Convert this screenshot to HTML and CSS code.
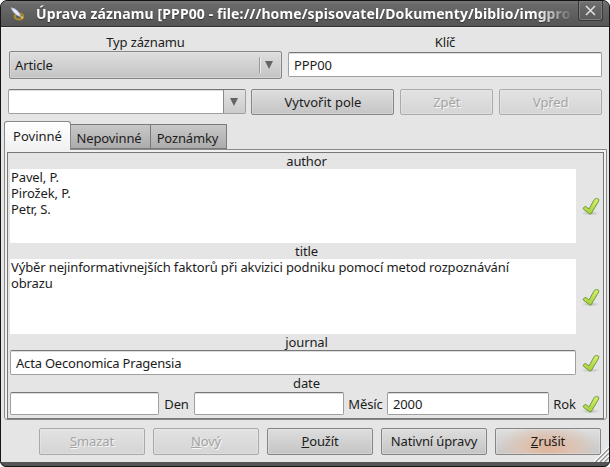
FILE: index.html
```html
<!DOCTYPE html>
<html lang="cs">
<head>
<meta charset="utf-8">
<title>Úprava záznamu</title>
<link rel="stylesheet" href="styles.css">
</head>
<body>
<svg width="0" height="0" class="defs">
  <defs>
    <linearGradient id="green" x1="0" y1="0" x2="0" y2="1"><stop offset="0" stop-color="#d9ee70"/><stop offset="1" stop-color="#a6cf38"/></linearGradient>
    <radialGradient id="shade"><stop offset="0" stop-color="#999" stop-opacity=".6"/><stop offset="1" stop-color="#999" stop-opacity="0"/></radialGradient>
    <symbol id="check" viewBox="0 0 20 20">
      <ellipse cx="9.5" cy="17.3" rx="9.5" ry="2.2" fill="url(#shade)"/>
      <path d="M2.3 12.2Q3.2 10.2 4.9 10.6L8 13L13.4 3.3Q15.4 1.6 17.7 3.2V5L10 18H8.9L2.5 13.3Z" fill="url(#green)" stroke="#6f9c45" stroke-width="1" stroke-linejoin="round"/>
    </symbol>
  </defs>
</svg>
<div class="window">
  <header class="titlebar">
    <svg class="app-icon" width="16" height="16" viewBox="0 0 16 16">
      <ellipse cx="9" cy="9.5" rx="4.2" ry="3" fill="none" stroke="#a98a28" stroke-width="2.2"/>
      <path d="M11 10l2 1" stroke="#e2c050" stroke-width="2"/>
      <path d="M1 .7Q5.5 1.3 8.5 5L11 9.8L7 8.2Q2.8 5.5 1 .7Z" fill="#e9eaff" stroke="#b9bad4" stroke-width=".7"/>
    </svg>
    <h1 class="title">Úprava záznamu [PPP00 - file:///home/spisovatel/Dokumenty/biblio/imgpro</h1>
    <div class="close"><svg width="11" height="11" viewBox="0 0 11 11"><path d="M1 1L10 10M10 1L1 10" stroke="#e2e2e2" stroke-width="1.5"/></svg></div>
  </header>
  <main class="content">
    <div class="top-row">
      <div class="type-col"><span class="label">Typ záznamu</span>
        <div class="button select"><span>Article</span><i class="divider"></i><i class="arrow"></i></div>
      </div>
      <div class="key-col"><span class="label">Klíč</span><div class="field key"><span>PPP00</span></div></div>
    </div>
    <div class="tool-row">
      <div class="field combo"><div class="drop"><i class="arrow"></i></div></div>
      <div class="button create"><span class="t-create">Vytvořit pole</span></div>
      <div class="button disabled undo"><span>Zpět</span></div>
      <div class="button disabled redo"><span>Vpřed</span></div>
    </div>
    <nav class="tabs">
      <div class="tab active"><span>Povinné</span></div>
      <div class="tab second"><span>Nepovinné</span></div>
      <div class="tab third"><span>Poznámky</span></div>
    </nav>
    <section class="pane"><div class="frame">
      <div class="caption">author</div>
      <div class="entry"><div class="area authors">Pavel, P.<br>Pirožek, P.<br>Petr, S.</div><svg class="check" width="20" height="20"><use href="#check"/></svg></div>
      <div class="caption">title</div>
      <div class="entry"><div class="area area-title"><span>Výběr nejinformativnejších faktorů při akvizici podniku pomocí metod rozpoznávání</span><br>obrazu</div><svg class="check" width="20" height="20"><use href="#check"/></svg></div>
      <div class="caption">journal</div>
      <div class="entry"><div class="field journal"><span class="t-journal">Acta Oeconomica Pragensia</span></div><svg class="check" width="20" height="20"><use href="#check"/></svg></div>
      <div class="caption date-caption">date</div>
      <div class="entry date">
        <div class="field day"></div><span class="unit den">Den</span>
        <div class="field month"></div><span class="unit mesic">Měsíc</span>
        <div class="field year"><span>2000</span></div><span class="unit rok">Rok</span>
        <svg class="check" width="20" height="20"><use href="#check"/></svg>
      </div>
    </div></section>
    <footer class="actions">
      <div class="button disabled"><span><u>S</u>mazat</span></div>
      <div class="button disabled"><span><u>N</u>ový</span></div>
      <div class="button"><span><u>P</u>oužít</span></div>
      <div class="button"><span>Nativní úpravy</span></div>
      <div class="button glow"><span><u>Z</u>rušit</span></div>
    </footer>
    <svg class="grip" width="15" height="15" viewBox="0 0 15 15"><path d="M0 15L15 0M4.5 15L15 4.5M9 15L15 9" stroke="#fff" stroke-width="1.5"/><path d="M1.5 15L15 1.5M6 15L15 6M10.5 15L15 10.5" stroke="#8c8c8c" stroke-width="1.2"/></svg>
  </main>
</div>
</body>
</html>
```

FILE: styles.css
```css
* { box-sizing: border-box; }
body { margin: 0; background: #fff; font: 13px/16px "Noto Sans", "Open Sans", sans-serif; color: #1c1c1c; letter-spacing: -0.13px; }
.defs { position: absolute; }
.window { width: 610px; height: 467px; border: 1px solid #151515; border-radius: 7px 7px 6px 6px; background: #555; overflow: hidden; padding-bottom: 4px; display: flex; flex-direction: column; }
.titlebar { height: 26px; flex: none; display: flex; background: linear-gradient(#777 0, #696969 15%, #555 100%); border-bottom: 1px solid #303030; }
.app-icon { margin: 6px 0 0 9px; flex: none; }
.title { margin: 2px 0 0 10px; width: 538px; flex: none; font-size: 14px; line-height: 22px; font-weight: 700; color: #fff; white-space: nowrap; overflow: hidden; letter-spacing: 0.11px; text-shadow: 0 1px 1px #333; -webkit-mask-image: linear-gradient(90deg, #000 500px, transparent 538px); mask-image: linear-gradient(90deg, #000 500px, transparent 538px); }
.close { width: 25px; height: 20px; margin-left: 4px; border: 1px solid #383838; border-top: 0; border-radius: 0 0 3px 3px; box-shadow: inset 0 0 0 1px #7d7d7d; display: flex; align-items: center; justify-content: center; }
.content { flex: 1; background: #e5e5e5; position: relative; border-top: 1px solid #eee; overflow: hidden; }
.label { display: block; text-align: center; height: 17px; white-space: nowrap; }
.top-row { display: flex; margin: 6px 7px 0 8px; gap: 6px; }
.type-col { width: 273px; }
.key-col { width: 314px; }
.button { border: 1px solid #858585; border-radius: 2px; height: 27px; display: flex; align-items: center; justify-content: center; white-space: nowrap; background: linear-gradient(#dedede, #c4c4c4); box-shadow: inset 0 0 0 1px #f0f0f055; padding-bottom: 1px; }
.select { height: 28px; justify-content: flex-start; padding: 0 8px 1px 5px; }
.divider { width: 1px; height: 16px; background: #999; margin-left: auto; margin-right: 4px; border-right: 1px solid #eee; box-sizing: content-box; }
.arrow { border: 4px solid transparent; border-top: 8px solid #656565; border-bottom: 0; }
.field { background: #fff; border: 1px solid #a0a0a0; border-top-color: #777; border-radius: 2px; height: 26px; padding-left: 5px; display: flex; align-items: center; white-space: nowrap; box-shadow: inset 0 1px #ddd; }
.key { margin-top: 1px; height: 25px; }
.tool-row { display: flex; margin: 10px 7px 0 7px; }
.combo { width: 238px; height: 25px; padding: 0; justify-content: flex-end; }
.drop { width: 22px; height: 23px; border-left: 1px solid #8a8a8a; background: linear-gradient(#e2e2e2, #cbcbcb); display: flex; align-items: center; justify-content: center; }
.create { width: 144px; margin-left: 5px; }
.t-create { margin-right: -1px; letter-spacing: 0; }
.undo { width: 93px; margin-left: 6px; }
.redo { width: 103px; margin-left: 6px; }
.tool-row .button { height: 26px; }
.disabled { color: #a4a4a4; border-color: #aaa; background: linear-gradient(#e2e2e2, #d5d5d5); text-shadow: 1px 1px #f6f6f6; }
.tabs { display: flex; align-items: flex-end; margin: 6px 0 0 3px; height: 28px; position: relative; z-index: 1; }
.tab { height: 25px; border: 1px solid #7a7a7a; border-left: 0; background: linear-gradient(#c8c8c8, #acacac); display: flex; align-items: center; justify-content: center; white-space: nowrap; padding-top: 3px; letter-spacing: -0.13px; }
.tab.active { width: 67px; height: 29px; margin-bottom: -1px; border: 1px solid #888; border-bottom: 0; border-radius: 3px 3px 0 0; background: linear-gradient(#fff, #f1f1f1); padding: 0; letter-spacing: 0; }
.second { width: 80px; padding-right: 3px; }
.third { width: 76px; padding-right: 2px; }
.pane { margin: 0 2px 0 3px; height: 271px; border: 1px solid #888; border-radius: 0 0 3px 3px; background: #f1f1f1; padding: 2px; }
.frame { height: 267px; border: 1px solid #777; background: #e5e5e5; padding-left: 2px; }
.caption { height: 16px; width: 593px; text-align: center; }
.entry { display: flex; align-items: center; }
.entry > * { flex: none; }
.area { width: 566px; background: #fff; padding: 0 1px; white-space: nowrap; }
.authors { height: 74px; }
.area-title { height: 75px; }
.check { margin-left: 5px; }
.journal { width: 566px; height: 25px; }
.t-journal { letter-spacing: -0.2px; }
.day { width: 149px; }
.month { width: 150px; }
.year { width: 162px; }
.date-caption { height: 17px; }
.date .field { height: 23px; }
.unit { text-align: center; }
.den { width: 35px; }
.mesic { width: 43px; }
.rok { width: 27px; padding-left: 4px; }
.actions { display: flex; gap: 8px; margin: 8px 0 0 38px; }
.actions .button { width: 106px; }
.glow { background: radial-gradient(ellipse 50px 24px at 50% 75%, #dfb49b, #dcc3b3 50%, #d2d2d200), linear-gradient(#dedede, #c8c8c8); }
u { text-decoration-thickness: 1px; text-underline-offset: 1px; }
.grip { position: absolute; right: 0; bottom: 0; }
```
